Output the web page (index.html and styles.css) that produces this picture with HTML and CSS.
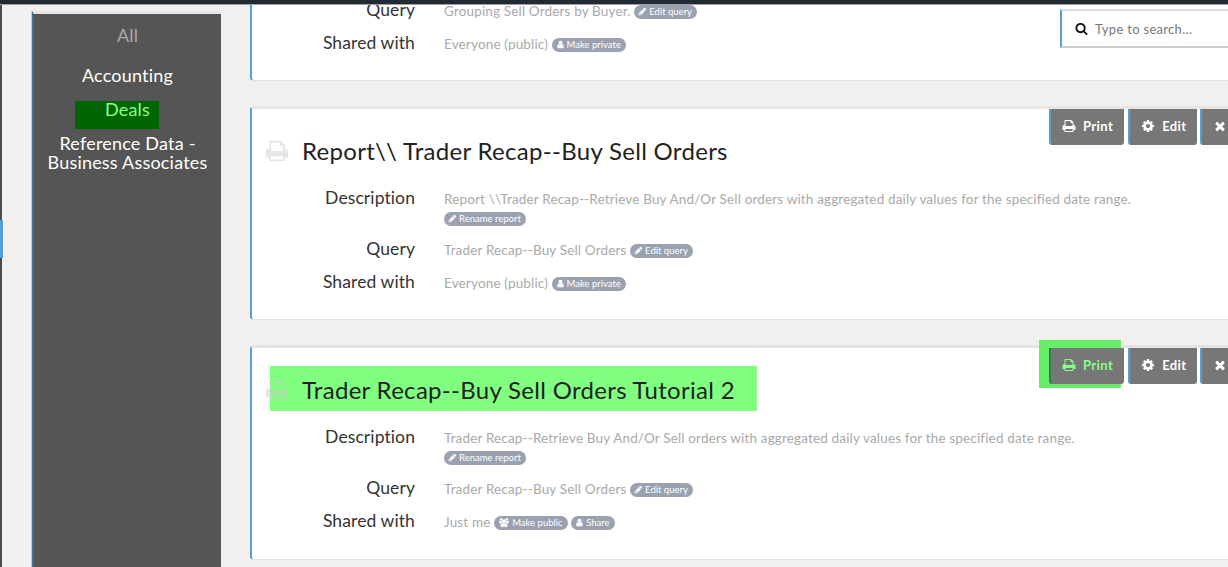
FILE: index.html
```html
<!DOCTYPE html>
<html lang="en">
<head>
  <meta charset="UTF-8" />
  <title>Reports</title>
  <link rel="stylesheet" href="styles.css">
</head>
<body>
  <svg class="icon-defs" xmlns="http://www.w3.org/2000/svg">
    <symbol id="i-search" viewBox="0 0 1792 1792"><path d="M1216 832q0-185-131.500-316.500t-316.500-131.500-316.500 131.500-131.500 316.500 131.500 316.500 316.500 131.500 316.500-131.500 131.500-316.500zm512 832q0 52-38 90t-90 38q-54 0-90-38l-343-342q-179 124-399 124-143 0-273.500-55.500t-225-150-150-225-55.500-273.500 55.500-273.500 150-225 225-150 273.500-55.500 273.500 55.500 225 150 150 225 55.500 273.500q0 220-124 399l343 343q37 37 37 90z"/></symbol>
    <symbol id="i-print" viewBox="0 0 1792 1792"><path d="M448 1536h896v-256h-896v256zm0-640h896v-384h-160q-40 0-68-28t-28-68v-160h-640v640zm1152 64q0-26-19-45t-45-19-45 19-19 45 19 45 45 19 45-19 19-45zm128 0v416q0 13-9.500 22.500t-22.500 9.500h-224v160q0 40-28 68t-68 28h-960q-40 0-68-28t-28-68v-160h-224q-13 0-22.500-9.500t-9.500-22.500v-416q0-79 56.500-135.500t135.500-56.500h64v-544q0-40 28-68t68-28h672q40 0 88 20t76 48l152 152q28 28 48 76t20 88v256h64q79 0 135.500 56.500t56.500 135.500z"/></symbol>
    <symbol id="i-cog" viewBox="0 0 1792 1792"><path d="M1152 896q0-106-75-181t-181-75-181 75-75 181 75 181 181 75 181-75 75-181zm512-109v222q0 12-8 23t-20 13l-185 28q-19 54-39 91 35 50 107 138 10 12 10 25t-9 23q-27 37-99 108t-94 71q-12 0-26-9l-138-108q-44 23-91 38-16 136-29 186-7 28-36 28h-222q-14 0-24.500-8.500t-11.500-21.500l-28-184q-49-16-90-37l-141 107q-10 9-25 9-14 0-25-11-126-114-165-168-7-10-7-23 0-12 8-23 15-21 51-66.500t54-70.500q-27-50-41-99l-183-27q-13-2-21-12.500t-8-23.500v-222q0-12 8-23t19-13l186-28q14-46 39-92-40-57-107-138-10-12-10-24 0-10 9-23 26-36 98.500-107.500t94.500-71.500q13 0 26 10l138 107q44-23 91-38 16-136 29-186 7-28 36-28h222q14 0 24.500 8.500t11.500 21.500l28 184q49 16 90 37l142-107q9-9 24-9 13 0 25 10 129 119 165 170 7 8 7 22 0 12-8 23-15 21-51 66.500t-54 70.500q26 50 41 98l183 28q13 2 21 12.500t8 23.500z"/></symbol>
    <symbol id="i-times" viewBox="0 0 1792 1792"><path d="M1490 1322q0 40-28 68l-136 136q-28 28-68 28t-68-28l-294-294-294 294q-28 28-68 28t-68-28l-136-136q-28-28-28-68t28-68l294-294-294-294q-28-28-28-68t28-68l136-136q28-28 68-28t68 28l294 294 294-294q28-28 68-28t68 28l136 136q28 28 28 68t-28 68l-294 294 294 294q28 28 28 68z"/></symbol>
    <symbol id="i-pencil" viewBox="0 0 1792 1792"><path d="M491 1536l91-91-235-235-91 91v107h128v128h107zm523-928q0-22-22-22-10 0-17 7l-542 542q-7 7-7 17 0 22 22 22 10 0 17-7l542-542q7-7 7-17zm-54-192l416 416-832 832h-416v-416zm683 96q0 53-37 90l-166 166-416-416 166-165q36-38 90-38 53 0 91 38l235 234q37 39 37 91z"/></symbol>
    <symbol id="i-user" viewBox="0 0 1792 1792"><path d="M1536 1399q0 109-62.500 187t-150.500 78h-854q-88 0-150.500-78t-62.500-187q0-85 8.500-160.500t31.500-152 58.500-131 94-89 134.500-34.500q131 128 313 128t313-128q76 0 134.500 34.500t94 89 58.500 131 31.500 152 8.500 160.500zm-256-887q0 159-112.500 271.500t-271.500 112.500-271.500-112.500-112.500-271.500 112.500-271.500 271.500-112.500 271.500 112.500 112.500 271.500z"/></symbol>
    <symbol id="i-users" viewBox="0 0 1920 1792"><path d="M593 896q-162 5-265 128h-134q-82 0-138-40.500t-56-118.500q0-353 124-353 6 0 43.500 21t97.500 42.500 119 21.500q67 0 133-23-5 37-5 66 0 139 81 256zm1071 637q0 120-73 189.500t-194 69.500h-874q-121 0-194-69.500t-73-189.500q0-53 3.500-103.500t14-109 26.500-108.500 43-97.500 62-81 85.500-53.500 111.500-20q10 0 43 21.500t73 48 107 48 135 21.500 135-21.500 107-48 73-48 43-21.500q61 0 111.500 20t85.500 53.500 62 81 43 97.500 26.500 108.500 14 109 3.500 103.500zm-1024-1277q0 106-75 181t-181 75-181-75-75-181 75-181 181-75 181 75 75 181zm704 384q0 159-112.500 271.500t-271.500 112.500-271.500-112.500-112.500-271.500 112.500-271.500 271.500-112.500 271.500 112.500 112.500 271.500zm576 225q0 78-56 118.500t-138 40.500h-134q-103-123-265-128 81-117 81-256 0-29-5-66 66 23 133 23 59 0 119-21.500t97.500-42.500 43.500-21q124 0 124 353zm-128-609q0 106-75 181t-181 75-181-75-75-181 75-181 181-75 181 75 75 181z"/></symbol>
  </svg>

  <div class="topbar"></div>
  <div class="edge"><span class="edge-mark"></span></div>

  <div class="search">
    <svg class="search-icon"><use href="#i-search"/></svg>
    <span>Type to search...</span>
  </div>

  <div class="layout">
    <aside class="sidebar">
      <a class="cat cat-all">All</a>
      <a class="cat">Accounting</a>
      <a class="cat cat-deals"><span class="deals-box"></span><span class="deals-text">Deals</span></a>
      <a class="cat">Reference Data -<br>Business Associates</a>
    </aside>

    <main class="reports">
      <section class="card card-cut">
        <div class="row row-query">
          <div class="label">Query</div>
          <div class="value">Grouping Sell Orders by Buyer. <a class="pill"><svg><use href="#i-pencil"/></svg>Edit query</a></div>
        </div>
        <div class="row">
          <div class="label">Shared with</div>
          <div class="value">Everyone (public) <a class="pill"><svg><use href="#i-user"/></svg>Make private</a></div>
        </div>
      </section>

      <section class="card">
        <div class="actions">
          <a class="btn"><svg><use href="#i-print"/></svg>Print</a>
          <a class="btn btn-edit"><svg><use href="#i-cog"/></svg>Edit</a>
          <a class="btn btn-x"><svg><use href="#i-times"/></svg></a>
        </div>
        <h2 class="title"><svg class="title-icon"><use href="#i-print"/></svg>Report\\ Trader Recap--Buy Sell Orders</h2>
        <div class="row row-desc">
          <div class="label">Description</div>
          <div class="value">Report \\Trader Recap--Retrieve Buy And/Or Sell orders with aggregated daily values for the specified date range.<br><a class="pill"><svg><use href="#i-pencil"/></svg>Rename report</a></div>
        </div>
        <div class="row row-query">
          <div class="label">Query</div>
          <div class="value">Trader Recap--Buy Sell Orders <a class="pill"><svg><use href="#i-pencil"/></svg>Edit query</a></div>
        </div>
        <div class="row">
          <div class="label">Shared with</div>
          <div class="value">Everyone (public) <a class="pill"><svg><use href="#i-user"/></svg>Make private</a></div>
        </div>
      </section>

      <section class="card card-last">
        <div class="hl hl-print"></div>
        <div class="hl hl-title"></div>
        <div class="actions">
          <a class="btn btn-on"><svg><use href="#i-print"/></svg>Print</a>
          <a class="btn btn-edit"><svg><use href="#i-cog"/></svg>Edit</a>
          <a class="btn btn-x"><svg><use href="#i-times"/></svg></a>
        </div>
        <h2 class="title"><svg class="title-icon"><use href="#i-print"/></svg>Trader Recap--Buy Sell Orders Tutorial 2</h2>
        <div class="row row-desc">
          <div class="label">Description</div>
          <div class="value">Trader Recap--Retrieve Buy And/Or Sell orders with aggregated daily values for the specified date range.<br><a class="pill"><svg><use href="#i-pencil"/></svg>Rename report</a></div>
        </div>
        <div class="row row-query">
          <div class="label">Query</div>
          <div class="value">Trader Recap--Buy Sell Orders <a class="pill"><svg><use href="#i-pencil"/></svg>Edit query</a></div>
        </div>
        <div class="row">
          <div class="label">Shared with</div>
          <div class="value">Just me <a class="pill"><svg class="wide"><use href="#i-users"/></svg>Make public</a> <a class="pill"><svg><use href="#i-user"/></svg>Share</a></div>
        </div>
      </section>
    </main>
  </div>
</body>
</html>
```
FILE: styles.css
```css
body {
  margin: 0;
  height: 567px;
  overflow: hidden;
  position: relative;
  background-color: #f1f0ee;
  color: #222;
  font-family: Lato, "Open Sans", sans-serif;
}
.icon-defs {
  position: absolute;
  width: 0;
  height: 0;
}
.topbar {
  position: absolute;
  left: 0;
  right: 0;
  top: 0;
  height: 5px;
  box-sizing: border-box;
  background-color: #222b33;
  border-bottom: 1px solid #9aa0a4;
  z-index: 4;
}
.edge {
  position: absolute;
  left: 0;
  top: 4px;
  bottom: 0;
  width: 2px;
  background-color: #4b4b4b;
}
.edge-mark {
  position: absolute;
  left: 0;
  top: 216px;
  width: 3px;
  height: 38px;
  background-color: #4f9fdd;
}
.layout {
  display: flex;
  padding-left: 32px;
  height: 567px;
}
.sidebar {
  width: 189px;
  flex: none;
  margin-top: 11px;
  padding-top: 12px;
  box-sizing: border-box;
  background-color: #555;
  border-left: 2px solid #3f6f8c;
  border-top: 3px solid #e6e5e3;
  box-shadow: -1px 0 0 #a9d3e8;
  text-align: center;
  color: #fff;
  font-size: 18px;
  letter-spacing: 0.2px;
  line-height: 19px;
}
.cat {
  display: block;
  margin-bottom: 15px;
}
.cat-all {
  color: #aaa;
  margin-bottom: 21px;
}
.cat-deals {
  position: relative;
  height: 19px;
  color: #88ff88;
}
.deals-box {
  position: absolute;
  left: 41px;
  top: 1px;
  width: 84px;
  height: 28px;
  background-color: #006400;
}
.deals-text {
  position: relative;
}
.reports {
  flex: none;
  width: 1000px;
  margin-left: 29px;
  display: flex;
  flex-direction: column;
  gap: 25px;
}
.card {
  position: relative;
  flex: none;
  height: 214px;
  box-sizing: border-box;
  padding-top: 25px;
  background-color: #fff;
  border-left: 2px solid #5a9fd0;
  border-top: 3px solid #e6e5e3;
  border-bottom: 1px solid #e2e1df;
  border-radius: 4px 0 0 4px;
}
.card-cut {
  height: 81px;
  border-top: 0;
  border-radius: 0 0 0 4px;
  padding-top: 0;
}
.card-last {
  height: 215px;
}
.title {
  position: relative;
  margin: 0 0 20px 13px;
  display: flex;
  align-items: center;
  font-weight: 400;
  font-size: 24px;
  letter-spacing: 0.3px;
  line-height: 34px;
  color: #222;
}
.title-icon {
  width: 24px;
  height: 24px;
  margin-right: 13px;
  fill: #ccc;
  fill-opacity: 0.5;
  flex: none;
}
.row {
  display: flex;
  align-items: flex-start;
  margin-bottom: 12px;
}
.row-desc {
  margin-bottom: 11px;
}
.label {
  width: 163px;
  flex: none;
  text-align: right;
  font-size: 17.5px;
  letter-spacing: 0.1px;
  line-height: 19px;
  color: #333;
}
.value {
  margin: 2px 0 0 29px;
  font-size: 13.5px;
  letter-spacing: 0.16px;
  line-height: 19px;
  color: #a9a9a9;
}
.pill {
  display: inline-flex;
  align-items: center;
  height: 14px;
  padding: 0 5px 0 4px;
  border-radius: 7px;
  background-color: #9ba1b0;
  color: #fff;
  font-size: 9.5px;
  letter-spacing: 0;
  line-height: 14px;
}
.pill svg {
  width: 9px;
  height: 9px;
  margin-right: 2px;
  fill: #fff;
}
.pill svg.wide {
  width: 12px;
}
.actions {
  position: absolute;
  left: 797px;
  top: 0;
  display: flex;
  gap: 4px;
  z-index: 2;
}
.btn {
  display: flex;
  align-items: center;
  height: 34px;
  padding: 0 11px 2px;
  background-color: #777;
  border-left: 2px solid #5a9fd0;
  border-radius: 0 0 3px 3px;
  color: #fff;
  font-size: 13px;
  font-weight: 700;
  letter-spacing: 0.4px;
}
.btn svg {
  width: 14px;
  height: 14px;
  margin-right: 7px;
  fill: #fff;
}
.btn-edit {
  padding-right: 10px;
}
.btn-x {
  margin-left: -1px;
  padding-right: 6px;
}
.btn-x svg {
  margin-right: 0;
}
.btn-on {
  color: #88ff88;
  border-left-color: #2f7d55;
}
.btn-on svg {
  fill: #88ff88;
}
.hl {
  position: absolute;
  background-color: #80ff80;
}
.hl-title {
  left: 18px;
  top: 18px;
  width: 487px;
  height: 45px;
}
.hl-print {
  left: 787px;
  top: -8px;
  width: 82px;
  height: 48px;
  background-color: #66ee66;
  z-index: 1;
}
.search {
  position: absolute;
  left: 1060px;
  top: 9px;
  width: 200px;
  height: 39px;
  box-sizing: border-box;
  display: flex;
  align-items: center;
  padding-left: 13px;
  background-color: #fff;
  border-left: 2px solid #5a9fd0;
  border-top: 2px solid #ddd;
  border-bottom: 2px solid #ccc;
  color: #777;
  font-size: 13px;
  letter-spacing: 0.3px;
  z-index: 3;
}
.search-icon {
  width: 13px;
  height: 13px;
  margin-right: 7px;
  fill: #111;
}
```
